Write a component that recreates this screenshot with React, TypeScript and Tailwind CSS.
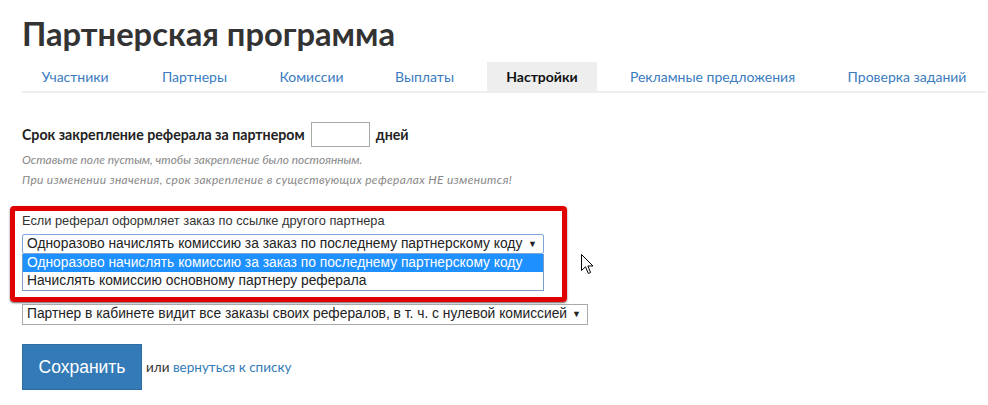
import React from 'react'

const tabs = [
  { label: 'Участники', w: 'w-[106px]' },
  { label: 'Партнеры', w: 'w-[103px]' },
  { label: 'Комиссии', w: 'w-[101px]' },
  { label: 'Выплаты', w: 'w-[95px]' },
  { label: 'Настройки', w: 'w-[110px]', active: true },
  { label: 'Рекламные предложения', w: 'w-[201px]' },
  { label: 'Проверка заданий', w: 'w-[158px]' },
]

const Arrow = () => <span className="text-[9px] text-[#222] leading-none">▼</span>

const Cursor = () => (
  <svg width="13" height="21" viewBox="0 0 13 21" className="absolute left-[581px] top-[254px]">
    <path
      d="M0.5 0.5 L0.5 16.5 L4.5 12.8 L7.3 19.5 L9.6 18.5 L6.9 12 L12 12 Z"
      fill="#fff"
      stroke="#000"
      strokeWidth="1"
      strokeLinejoin="round"
    />
  </svg>
)

const App = () => {
  return (
    <div className="relative w-[988px] h-[405px] overflow-hidden bg-white pl-[22px] pr-[2px] text-[#333] font-['Lato','Open_Sans',sans-serif]">
      <h1 className="pt-[14px] h-[62px] text-[32.7px] leading-[40px] font-bold text-[#333]">
        Партнерская программа
      </h1>

      <div className="flex gap-[15px] border-b-2 border-[#eee] h-[31px]">
        {tabs.map((t) => (
          <div
            key={t.label}
            className={`${t.w} shrink-0 flex items-center justify-center text-[14px] ${
              t.active ? 'bg-[#eee] font-bold text-[#111]' : 'text-[#3a7bbf]'
            }`}
          >
            {t.label}
          </div>
        ))}
      </div>

      <div className="mt-[29px] flex items-center h-[25px] text-[14.2px] font-bold text-[#222]">
        <span>Срок закрепление реферала за партнером</span>
        <div className="ml-[6px] w-[59px] h-[25px] border border-[#aaa] bg-white" />
        <span className="ml-[6px]">дней</span>
      </div>
      <div className="mt-[3px] text-[11.9px] italic text-[#888] leading-[20px] font-['Lato',sans-serif] whitespace-nowrap">
        <p>Оставьте поле пустым, чтобы закрепление было постоянным.</p>
        <p className="tracking-[0.35px]">При изменении значения, срок закрепление в существующих рефералах НЕ изменится!</p>
      </div>

      <div className="mt-[16px] ml-[-12px] w-[557px] h-[96px] border-[5px] border-[#e00000] rounded-[4px] pl-[7px] pt-[2px] shadow-[0_1px_2px_rgba(0,0,0,0.6)] font-['Liberation_Sans',Arial,sans-serif]">
        <div className="text-[12.8px] leading-[16px] text-[#333]">
          Если реферал оформляет заказ по ссылке другого партнера
        </div>
        <div className="mt-[5px] w-[522px] h-[20px] border border-[#7ea6dc] rounded-[2px] flex items-center justify-between pl-[4px] pr-[6px] text-[13.8px] text-[#222] whitespace-nowrap">
          <span>Одноразово начислять комиссию за заказ по последнему партнерскому коду</span>
          <Arrow />
        </div>
        <div className="w-[522px] border border-[#7a9cc8] border-t-0 text-[13.8px] leading-[18px] whitespace-nowrap">
          <div className="bg-[#1e90ff] text-white pl-[4px]">
            Одноразово начислять комиссию за заказ по последнему партнерскому коду
          </div>
          <div className="text-[#222] pl-[4px]">Начислять комиссию основному партнеру реферала</div>
        </div>
      </div>

      <div className="mt-[2px] w-[566px] h-[21px] border border-[#a9a9a9] flex items-center justify-between pl-[4px] pr-[6px] text-[13.8px] text-[#222] font-['Liberation_Sans',Arial,sans-serif] whitespace-nowrap">
        <span>Партнер в кабинете видит все заказы своих рефералов, в т. ч. с нулевой комиссией</span>
        <Arrow />
      </div>

      <div className="mt-[19px] flex items-center">
        <button className="w-[120px] h-[46px] bg-[#337ab7] border border-[#2e6da4] text-white text-[17.5px] font-['Liberation_Sans',Arial,sans-serif]">
          Сохранить
        </button>
        <span className="ml-[4px] text-[13.5px] text-[#333]">
          или <a className="text-[#337ab7]">вернуться к списку</a>
        </span>
      </div>

      <Cursor />
    </div>
  )
}

export default App
